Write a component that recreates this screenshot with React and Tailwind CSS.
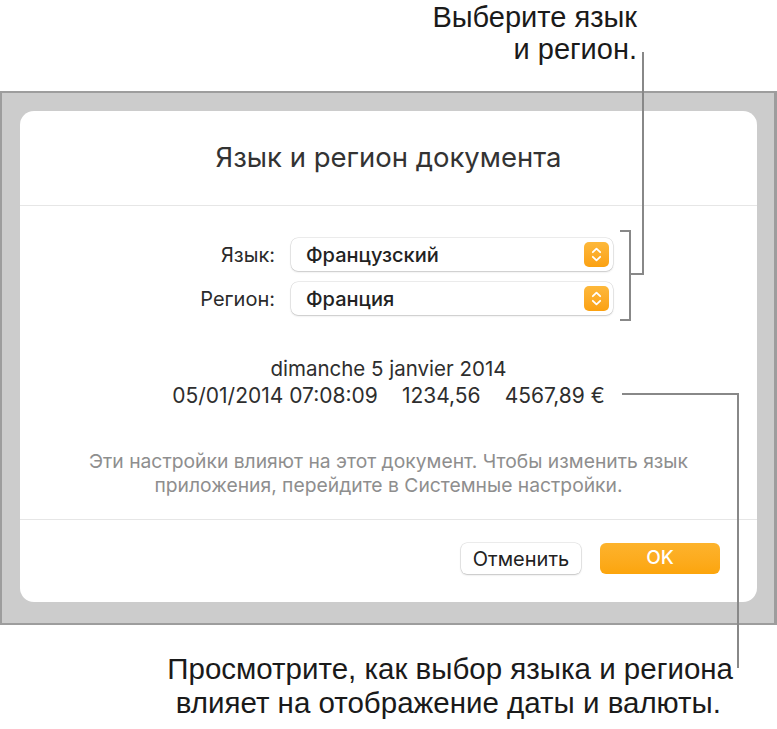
import React from "react";

function Stepper() {
  return (
    <div className="flex h-[25px] w-[25px] items-center justify-center rounded-[5px] bg-gradient-to-b from-[#fdb83a] to-[#fba10f]">
      <svg width="25" height="25" viewBox="0 0 25 25" fill="none">
        <path d="M8.8 10.2 L12.5 6.6 L16.2 10.2" stroke="white" strokeWidth="1.8" strokeLinecap="round" strokeLinejoin="round" />
        <path d="M8.8 14.8 L12.5 18.4 L16.2 14.8" stroke="white" strokeWidth="1.8" strokeLinecap="round" strokeLinejoin="round" />
      </svg>
    </div>
  );
}

function SelectRow({ label, value }) {
  return (
    <div className="flex items-center">
      <div className="w-[120px] pr-[16px] text-right text-[20px] text-[#2b2b2b]">{label}</div>
      <div className="flex h-[33px] w-[322px] items-center justify-between rounded-[7px] bg-white pl-[15px] pr-[4px] shadow-[0_0_0_0.5px_rgba(0,0,0,0.14),0_1px_2px_rgba(0,0,0,0.16)]">
        <span className="text-[20px] font-medium text-[#222]">{value}</span>
        <Stepper />
      </div>
    </div>
  );
}

export default function App() {
  return (
    <div className="relative h-[729px] w-[777px] overflow-hidden bg-white font-['Inter','Noto_Sans',sans-serif]">
      {/* upper annotation */}
      <div className="h-[91px] pr-[140px] pt-[1px] text-right font-['Liberation_Sans',Arial,sans-serif] text-[29px] leading-[32px] text-[#1a1a1a]">
        <div>Выберите язык</div>
        <div>и регион.</div>
      </div>

      {/* window backdrop */}
      <div className="h-[534px] w-[777px] border-2 border-r-[3px] border-[#9d9d9d] bg-[#cccccc] pl-[18px] pr-[17px] pt-[18px]">
        <div className="flex h-[491px] w-[737px] flex-col rounded-[14px] bg-white">
          <div className="flex h-[94px] items-center justify-center text-[27.5px] text-[#333]">
            Язык и регион документа
          </div>
          <div className="h-px bg-[#e6e6e6]" />

          <div className="flex flex-col gap-[11px] pl-[151px] pt-[32px]">
            <SelectRow label="Язык:" value="Французский" />
            <SelectRow label="Регион:" value="Франция" />
          </div>

          <div className="mt-[40px] flex flex-col items-center text-[20.5px] leading-[27px] text-[#2e2e2e]">
            <div>dimanche 5 janvier 2014</div>
            <div className="flex gap-[24px] text-[21px]">
              <span>05/01/2014 07:08:09</span>
              <span>1234,56</span>
              <span>4567,89 €</span>
            </div>
          </div>

          <div className="mt-[40px] text-center text-[19.3px] leading-[24px] text-[#8e8e8e]">
            <div>Эти настройки влияют на этот документ. Чтобы изменить язык</div>
            <div>приложения, перейдите в Системные настройки.</div>
          </div>

          <div className="mt-[22px] h-px bg-[#e6e6e6]" />

          <div className="flex justify-end gap-[19px] pr-[37px] pt-[23px]">
            <button className="flex h-[31px] w-[120px] items-center justify-center rounded-[6px] bg-white text-[20px] text-[#222] shadow-[0_0_0_0.5px_rgba(0,0,0,0.14),0_1px_2px_rgba(0,0,0,0.18)]">
              Отменить
            </button>
            <button className="flex h-[31px] w-[120px] items-center justify-center rounded-[6px] bg-gradient-to-b from-[#fdb32c] to-[#fca50b] text-[19px] font-medium text-white">
              OK
            </button>
          </div>
        </div>
      </div>

      {/* lower annotation */}
      <div className="pt-[27px] text-right font-['Liberation_Sans',Arial,sans-serif] text-[29.5px] leading-[34px] text-[#1a1a1a]">
        <div className="pr-[44px]">Просмотрите, как выбор языка и региона</div>
        <div className="pr-[56px]">влияет на отображение даты и валюты.</div>
      </div>

      {/* leader lines */}
      <svg className="pointer-events-none absolute left-0 top-0" width="777" height="729" viewBox="0 0 777 729" fill="none">
        <g stroke="#888" strokeWidth="2">
          <path d="M643 52 V274 H630" />
          <path d="M620 231 H630 V320 H620" />
          <path d="M622 394 H738 V668" />
        </g>
      </svg>
    </div>
  );
}
